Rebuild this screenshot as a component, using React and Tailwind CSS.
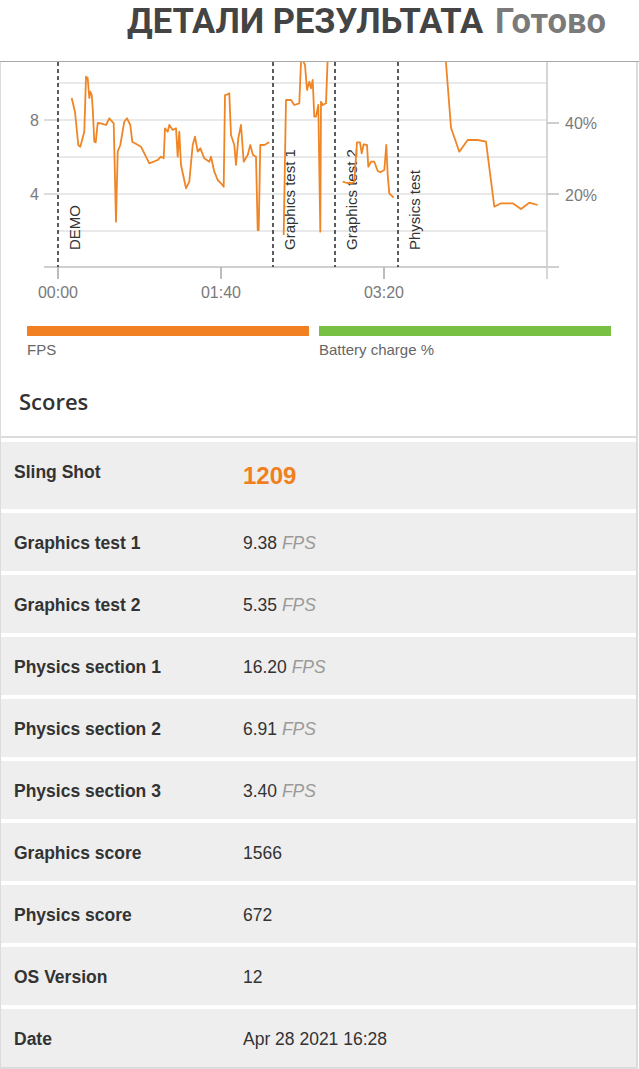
import React from "react";

const demoLine =
  "70.7,98 74,112 77.3,145 79.3,146.7 83.3,131.7 85,76.7 86.7,78 88.3,98 89.3,91.7 90.7,95 91.7,108 93.3,141.7 94.7,142.3 96.7,123 100,123.3 105,125 108.3,118.3 112.7,123.3 115,221.7 116.7,151.7 119.3,145 123.3,121.7 126,118.3 129.3,125 131.3,141.7 140,146.7 148.3,163.3 156.7,160 160,156.7 162.7,158.3 164,128.3 166.7,131.7 168.3,125 171.7,130 175,128.3 176.7,156.7 178.3,131.7 180,165 185,188.3 188.3,181.7 191.7,145 194,136.7 196.7,151.7 199.3,148.3 203.3,158.3 208.3,161.7 210,156.7 213.3,171.7 216.7,180 220,183.3 222.7,186.7 224,95 226.7,94.3 228.3,93.3 230,135 233.3,145 235,165 237.3,138.3 240,125 242.7,161.7 246.7,155 249.3,145 252,155 255,156.7 256.7,230 257.7,230 259.3,145 263.3,145 268.3,142.3";
const gt1Line =
  "282.7,235 285,100 290,100 293.3,105 298.3,103.3 300,61.7 301.7,60 304,65 306,90 308.3,81.7 310,88.3 311.7,80 313.3,116.7 315,116.7 317.3,105 319.3,231.7 320,101.7 321.7,105 325,103.3 327,50";
const gt2Line =
  "341.7,181.7 346,183 351,183 353.3,181.7 356,142.3 359,142.3 360.7,153.3 362.7,144.3 366,145 367.3,166.7 370,161.7 373.3,161.7 376.7,171 379.3,172.3 383.3,170 385.3,145 386.7,175 388.3,193.3 392.7,197.7";
const physLine =
  "444,50 450,127.7 458.3,151.7 466.7,140 476.7,140 485,141.7 493.3,206.7 500,203.3 511.7,203.3 520,209 528.3,202.7 536.7,205";

const markers = [
  { x: 57, label: "DEMO" },
  { x: 272, label: "Graphics test 1" },
  { x: 334, label: "Graphics test 2" },
  { x: 397, label: "Physics test" },
];

const rows = [
  { name: "Graphics test 1", value: "9.38", fps: true },
  { name: "Graphics test 2", value: "5.35", fps: true },
  { name: "Physics section 1", value: "16.20", fps: true },
  { name: "Physics section 2", value: "6.91", fps: true },
  { name: "Physics section 3", value: "3.40", fps: true },
  { name: "Graphics score", value: "1566" },
  { name: "Physics score", value: "672" },
  { name: "OS Version", value: "12" },
  { name: "Date", value: "Apr 28 2021 16:28" },
];

function Chart() {
  const grid = [83, 120, 157, 194, 231];
  return (
    <svg width="636" height="250" viewBox="0 62 636 250" className="block">
      {grid.map((y) => (
        <line key={y} x1="57" x2="546" y1={y} y2={y} stroke="#e2e2e2" strokeWidth="1.5" />
      ))}
      {/* left ticks */}
      <line x1="43" x2="57" y1="120" y2="120" stroke="#d0d0d0" strokeWidth="1.5" />
      <line x1="43" x2="57" y1="194" y2="194" stroke="#d0d0d0" strokeWidth="1.5" />
      {/* right axis */}
      <line x1="546" x2="546" y1="62" y2="279" stroke="#d6d6d6" strokeWidth="2" />
      <line x1="546" x2="558" y1="123" y2="123" stroke="#bdbdbd" strokeWidth="1.5" />
      <line x1="546" x2="558" y1="194" y2="194" stroke="#bdbdbd" strokeWidth="1.5" />
      {/* bottom axis */}
      <line x1="43" x2="558" y1="267" y2="267" stroke="#cfcfcf" strokeWidth="2" />
      {[57, 220, 383].map((x) => (
        <line key={x} x1={x} x2={x} y1="267" y2="279" stroke="#bdbdbd" strokeWidth="2" />
      ))}

      <g fontFamily="'Liberation Sans', Arial, sans-serif" fontSize="16" fill="#7a7a7a">
        <text x="38" y="126" textAnchor="end">8</text>
        <text x="38" y="200" textAnchor="end">4</text>
        <text x="564" y="129">40%</text>
        <text x="564" y="201">20%</text>
        <text x="57" y="298" textAnchor="middle">00:00</text>
        <text x="220" y="298" textAnchor="middle">01:40</text>
        <text x="383" y="298" textAnchor="middle">03:20</text>
      </g>

      {markers.map((m) => (
        <g key={m.label}>
          <line x1={m.x} x2={m.x} y1="62" y2="267" stroke="#333" strokeWidth="1.6" strokeDasharray="4 3" />
          <text
            transform={`translate(${m.x + 22} 250) rotate(-90)`}
            fontFamily="'Liberation Sans', Arial, sans-serif"
            fontSize="15"
            fill="#333"
          >
            {m.label}
          </text>
        </g>
      ))}

      {[demoLine, gt1Line, gt2Line, physLine].map((pts, i) => (
        <polyline
          key={i}
          points={pts}
          fill="none"
          stroke="#f08526"
          strokeWidth="1.8"
          strokeLinejoin="round"
        />
      ))}
    </svg>
  );
}

export default function App() {
  return (
    <div className="w-[639px] bg-white">
      <header className="flex h-[62px] items-start justify-end border-b border-[#a8a8a8] pr-[33px] pt-[1px] font-['Roboto',sans-serif] text-[34.5px] font-bold leading-[40px]">
        <span className="text-[#444]">ДЕТАЛИ РЕЗУЛЬТАТА</span>
        <span className="ml-[12px] text-[#7a7a7a]">Готово</span>
      </header>

      <div className="w-[638px] border-l border-r-2 border-[#dcdcdc] font-['Liberation_Sans',Arial,sans-serif]">
        <Chart />

        <div className="flex gap-[10px] pl-[26px] pt-[14px]">
          <div className="w-[282px]">
            <div className="h-[10px] bg-[#f08022]" />
            <div className="mt-[4px] text-[15px] leading-[20px] text-[#666]">FPS</div>
          </div>
          <div className="w-[292px]">
            <div className="h-[10px] bg-[#77c043]" />
            <div className="mt-[4px] text-[15px] leading-[20px] text-[#666]">Battery charge %</div>
          </div>
        </div>

        <h2 className="pl-[18px] pt-[26px] pb-[20px] font-['Open_Sans',sans-serif] text-[22px] font-semibold leading-[30px] text-[#333]">
          Scores
        </h2>

        <div className="border-t-2 border-[#dcdcdc] pt-[4px]">
          <div className="flex h-[67px] items-start bg-[#eeeeee] pt-[19px]">
            <div className="w-[242px] pl-[13px] text-[17.5px] font-bold leading-[22px] text-[#333]">Sling Shot</div>
            <div className="text-[24px] font-bold leading-[30px] text-[#f07f1e]">1209</div>
          </div>
          {rows.map((r) => (
            <div key={r.name} className="mt-[4px] flex h-[58px] items-center bg-[#eeeeee] pt-[2px]">
              <div className="w-[242px] pl-[13px] text-[17.5px] font-bold text-[#333]">{r.name}</div>
              <div className="text-[17.5px] text-[#333]">
                {r.value}
                {r.fps && <span className="italic text-[#9a9a9a]"> FPS</span>}
              </div>
            </div>
          ))}
        </div>
        <div className="h-[3px] bg-[#dcdcdc]" />
      </div>
    </div>
  );
}
